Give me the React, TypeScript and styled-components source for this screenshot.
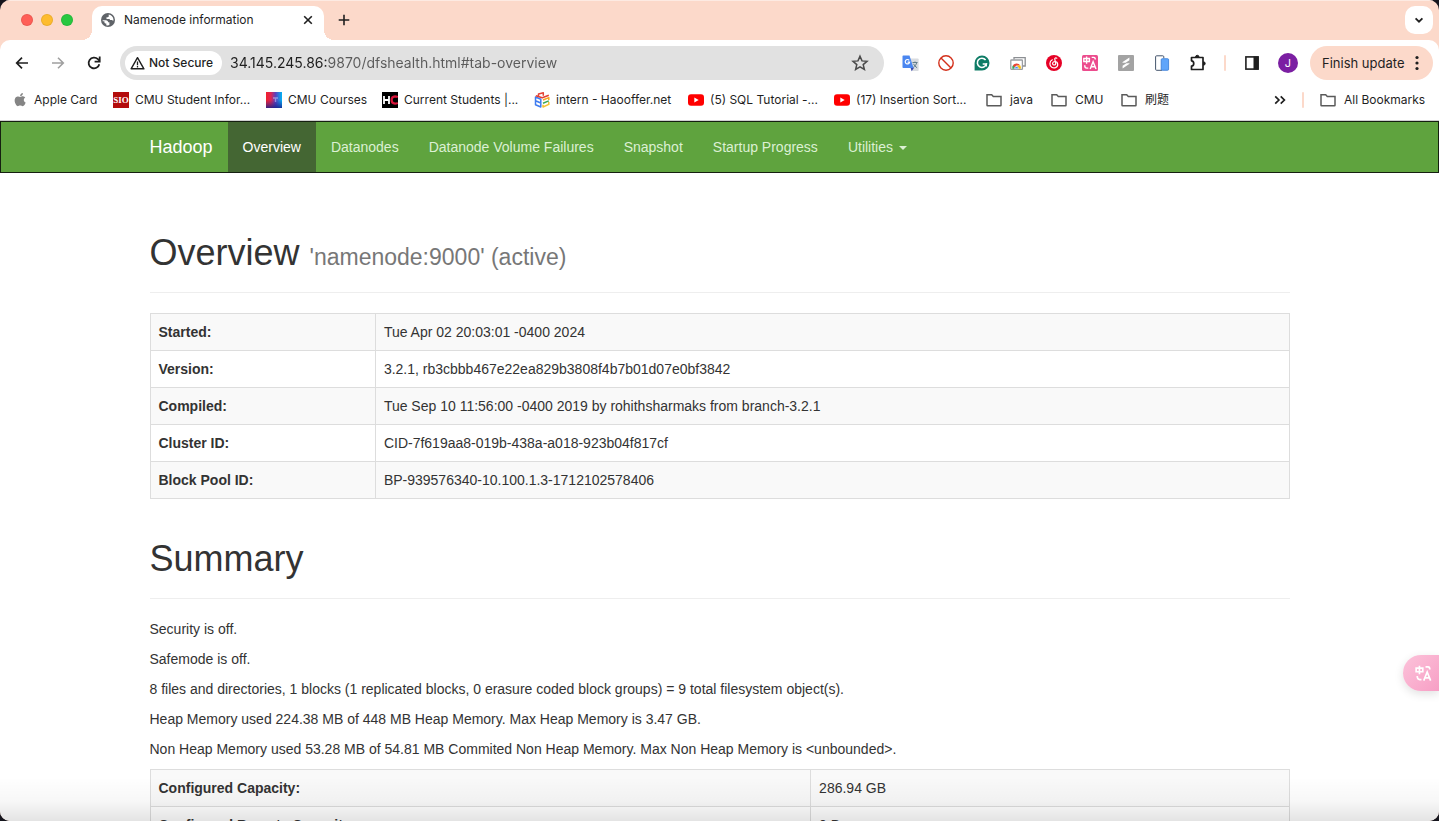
import React from 'react';
import styled, { createGlobalStyle } from 'styled-components';

const UI_FONT = "Inter, 'Noto Sans CJK SC', sans-serif";
const PAGE_FONT = "'Liberation Sans', Arial, sans-serif";
const PEACH = '#fcd9ca';

const GlobalStyle = createGlobalStyle`
  *, *::before, *::after { box-sizing: border-box; }
  body { margin: 0; background: #15151d; overflow: hidden; }
  button, input { font: inherit; color: inherit; border: 0; padding: 0; background: none; }
  a { color: inherit; text-decoration: none; }
  svg { display: block; flex: none; }
`;

const Window = styled.div`
  position: relative;
  display: flex;
  flex-direction: column;
  height: 100vh;
  overflow: hidden;
  background: ${PEACH};
  border-radius: 10px;
`;

/* ---------- tab strip ---------- */

const TabStrip = styled.header`
  display: flex;
  align-items: flex-end;
  flex: none;
  height: 40px;
  padding: 0 6px 0 21px;
  font-family: ${UI_FONT};
  box-shadow: inset 0 1px 0 #fdeae2;
`;

const TrafficLights = styled.div`
  display: flex;
  align-items: center;
  gap: 8px;
  width: 71px;
  height: 40px;
`;

const Light = styled.button<{ $color: string }>`
  width: 12px;
  height: 12px;
  border-radius: 50%;
  background: ${(p) => p.$color};
  box-shadow: inset 0 0 0 1px rgba(0, 0, 0, 0.08);
`;

const Tab = styled.div`
  position: relative;
  display: flex;
  align-items: center;
  width: 232px;
  height: 34px;
  padding: 0 8px 6px;
  border-radius: 10px 10px 0 0;
  background: #fff;
  color: #1f1f1f;
  font-size: 12px;
  line-height: 16px;

  &::before, &::after {
    content: '';
    position: absolute;
    bottom: 0;
    width: 10px;
    height: 10px;
  }
  &::before { left: -10px; background: radial-gradient(circle at 0 0, transparent 10px, #fff 10px); }
  &::after { right: -10px; background: radial-gradient(circle at 100% 0, transparent 10px, #fff 10px); }
`;

const TabTitle = styled.span`
  flex: 1;
  margin-left: 8px;
  white-space: nowrap;
`;

const IconButton = styled.button<{ $w?: number }>`
  display: flex;
  align-items: center;
  justify-content: center;
  flex: none;
  width: ${(p) => p.$w ?? 36}px;
  height: 28px;
`;

const NewTab = styled(IconButton)`
  margin: 0 auto 6px 6px;
`;

const TabSearch = styled(IconButton)`
  margin-bottom: 6px;
  border-radius: 10px;
  background: #fff;
`;

/* ---------- toolbar ---------- */

const Toolbar = styled.div`
  display: flex;
  align-items: center;
  flex: none;
  height: 46px;
  padding: 0 6px 0 4px;
  border-radius: 10px 10px 0 0;
  background: #fff;
  color: #1f1f1f;
  font-family: ${UI_FONT};
`;

const AddressBar = styled.div`
  display: flex;
  align-items: center;
  flex: 1;
  min-width: 0;
  height: 34px;
  margin: 0 8px;
  padding: 0 6px 0 5px;
  border-radius: 17px;
  background: #e1e1e1;
`;

const SecurityChip = styled.button`
  display: flex;
  align-items: center;
  gap: 4px;
  flex: none;
  width: 97px;
  height: 24px;
  padding-left: 5px;
  border-radius: 12px;
  background: #fff;
  font-size: 12px;
  font-weight: 500;
  line-height: 16px;
  white-space: nowrap;
`;

const UrlInput = styled.input`
  flex: 1;
  min-width: 0;
  height: 24px;
  margin-left: 8px;
  padding-bottom: 1px;
  outline: none;
  font-size: 14px;
  line-height: 20px;
  background: linear-gradient(to right, #1f1f1f 97px, #5a5a5a 97px);
  background-clip: text;
  -webkit-background-clip: text;
  -webkit-text-fill-color: transparent;
`;

const Divider = styled.span`
  flex: none;
  width: 2px;
  height: 16px;
  margin: 0 8px;
  border-radius: 1px;
  background: ${PEACH};
`;

const Avatar = styled.span`
  width: 20px;
  height: 20px;
  border-radius: 50%;
  background: #7b1fa2;
  color: #fff;
  font-size: 11px;
  line-height: 20px;
  text-align: center;
`;

const UpdateButton = styled.button`
  display: flex;
  align-items: center;
  justify-content: space-between;
  flex: none;
  width: 123px;
  height: 34px;
  margin-left: 4px;
  padding: 0 14px 0 12px;
  border-radius: 17px;
  background: ${PEACH};
  font-size: 13px;
  line-height: 16px;
  white-space: nowrap;
`;

/* ---------- bookmarks ---------- */

const BookmarkBar = styled.nav`
  display: flex;
  align-items: center;
  flex: none;
  height: 35px;
  padding: 0 15px 7px 12px;
  border-bottom: 1px solid #d0d0d0;
  background: #fff;
  color: #1f1f1f;
  font-family: ${UI_FONT};
  font-size: 12px;
  line-height: 16px;
`;

const Bookmark = styled.a<{ $w?: number; $folder?: boolean }>`
  display: flex;
  align-items: center;
  gap: ${(p) => (p.$folder ? 8 : 6)}px;
  flex: none;
  width: ${(p) => (p.$w ? `${p.$w}px` : 'auto')};
  white-space: nowrap;
`;

const AllBookmarks = styled(Bookmark)`
  margin-left: 8px;
`;

const Overflow = styled(IconButton)`
  margin-left: auto;
`;

/* ---------- page ---------- */

const Page = styled.div`
  flex: 1;
  min-height: 0;
  overflow: hidden;
  background: #fff;
  color: #333;
  font-family: ${PAGE_FONT};
  font-size: 14px;
  line-height: 20px;
`;

const Container = styled.div`
  max-width: 1170px;
  margin: 0 auto;
  padding: 0 15px;
`;

const Content = styled(Container)`
  display: flow-root;
`;

const Navbar = styled.nav`
  margin-bottom: 20px;
  border: 1px solid #151f10;
  background: #5fa33e;
`;

const NavRow = styled(Container)`
  display: flex;
`;

const Brand = styled.a`
  padding: 15px 15px 15px 0;
  color: #fff;
  font-size: 18px;
`;

const NavList = styled.ul`
  display: flex;
  margin: 0;
  padding: 0;
  list-style: none;
`;

const NavLink = styled.a<{ $active?: boolean }>`
  display: flex;
  align-items: center;
  gap: 6px;
  padding: 15px;
  color: ${(p) => (p.$active ? '#fff' : '#dcf0d3')};
  background: ${(p) => (p.$active ? '#446633' : 'transparent')};
`;

const Caret = styled.span`
  margin-top: 2px;
  border-top: 4px solid;
  border-left: 4px solid transparent;
  border-right: 4px solid transparent;
`;

const PageHeader = styled.div`
  margin: 40px 0 20px;
  padding-bottom: 19px;
  border-bottom: 1px solid #eee;
`;

const Title = styled.h1`
  margin: 0;
  font-size: 36px;
  font-weight: 400;
  line-height: 40px;
`;

const Subtitle = styled.small`
  color: #777;
  font-size: 23px;
  line-height: 1;
`;

const InfoTable = styled.table`
  width: 100%;
  margin-bottom: 20px;
  border-collapse: collapse;

  tr:nth-child(odd) > * { background: #f9f9f9; }
`;

const LabelCell = styled.th<{ $share?: number }>`
  width: ${(p) => (p.$share ? `${p.$share}%` : 'auto')};
  padding: 8px;
  border: 1px solid #ddd;
  text-align: left;
`;

const ValueCell = styled.td`
  padding: 8px;
  border: 1px solid #ddd;
`;

const Line = styled.p`
  margin: 0 0 10px;
`;

const BottomShade = styled.div`
  position: absolute;
  right: 0;
  bottom: 0;
  left: 0;
  height: 44px;
  background: linear-gradient(rgba(0, 0, 0, 0), rgba(0, 0, 0, 0.03) 55%, rgba(0, 0, 0, 0.11));
  pointer-events: none;
`;

const TranslateFab = styled.button`
  position: absolute;
  right: 0;
  bottom: 130px;
  display: flex;
  align-items: center;
  width: 36px;
  height: 36px;
  padding-left: 11px;
  border-radius: 18px 0 0 18px;
  background: linear-gradient(135deg, #fcc3da, #f79fc5);
  box-shadow: 0 3px 10px rgba(0, 0, 0, 0.12);
`;

/* ---------- icons ---------- */

const Stroke = ({ d, size = 16, color = '#1f1f1f', w = 2 }: { d: string; size?: number; color?: string; w?: number }) => (
  <svg width={size} height={size} viewBox="0 0 16 16" fill="none" stroke={color} strokeWidth={w}>
    <path d={d} />
  </svg>
);

const GlobeIcon = () => (
  <svg width="16" height="16" viewBox="0 0 16 16">
    <circle cx="8" cy="8" r="7" fill="#5f6368" />
    <path
      fill="#fff"
      d="M2.6 8.2h3.3c1.6 0 2.2 1 2.2 2.1h1.3v2.8c-.9.4-2.1.5-3.1.2v-1.7c-1.2 0-1.9-.7-1.9-1.6v-.8H2.7zM8.7 2.6c2.4.3 4.2 2.1 4.7 4.4.1.8 0 1.4-.2 2.1-.5-.7-1.2-1-2.4-1-.9 0-1.1-.5-1.1-1.2H6.500V5.200h1.400c.8 0 .8-.5.8-1.200z"
    />
  </svg>
);

const WarningIcon = () => (
  <svg width="15" height="15" viewBox="0 0 15 15" fill="none" stroke="#1f1f1f">
    <path d="M7.500 1.700 13.900 12.800H1.100Z" strokeWidth="1.400" strokeLinejoin="round" />
    <path d="M7.500 5.500v3.700M7.500 10v1.400" strokeWidth="1.300" />
  </svg>
);

const ReloadIcon = () => (
  <svg width="16" height="16" viewBox="0 0 16 16" fill="none" stroke="#1f1f1f" strokeWidth="1.800">
    <path d="M13.300 9.200A5.400 5.400 0 1 1 11.900 4.200L13.400 5.700" />
    <path d="M13.700 1.500v5.100H8.600" />
  </svg>
);

const StarIcon = () => (
  <svg width="18" height="18" viewBox="0 0 18 18" fill="none" stroke="#4a4a4a" strokeWidth="1.500">
    <path d="M9 2.200 11 6.900 16 7.300 12.200 10.600 13.400 15.500 9 12.900 4.600 15.500 5.800 10.600 2 7.300 7 6.900Z" />
  </svg>
);

const GoogleTranslateIcon = () => (
  <svg width="17" height="17" viewBox="0 0 17 17">
    <path d="M6 3.500h9.800a.8.8 0 0 1 .8.8v11a.8.8 0 0 1-.8.800H10z" fill="#d9dce0" />
    <path d="M8.500 12.500h3.800l-2.700 3.800z" fill="#3949ab" />
    <path d="M1.300.5h6.200l4 12.500H1.300a.8.8 0 0 1-.8-.8V1.300a.8.800 0 0 1 .8-.8z" fill="#4a86f0" />
    <path d="M7.200 5.400A2.200 2.200 0 1 0 7.600 7.100H5.600" fill="none" stroke="#fff" strokeWidth="1.200" />
    <path d="M10.500 7.500h5M13 6.500v1M14.700 7.600c-.4 2-1.600 3.500-3.200 4.500M11.500 8.800c.8 1.800 2 3 3.600 4" fill="none" stroke="#607d8b" strokeWidth="1" />
  </svg>
);

const BlockIcon = () => (
  <svg width="16" height="16" viewBox="0 0 16 16" fill="none" stroke="#d3301b" strokeWidth="1.400">
    <circle cx="8" cy="8" r="7.200" />
    <path d="m3 3 10 10" />
  </svg>
);

const GrammarlyIcon = () => (
  <svg width="16" height="16" viewBox="0 0 16 16">
    <path d="M8 .5A7.500 7.500 0 1 1 8 15.500H.6V8A7.500 7.500 0 0 1 8 .5z" fill="#0e7c66" />
    <path d="M11.600 5A4.600 4.600 0 1 0 12.400 9H8.700" fill="none" stroke="#fff" strokeWidth="1.600" />
    <path d="M12.400 8.300v3.200" stroke="#fff" strokeWidth="1.200" />
  </svg>
);

const RemoteIcon = () => (
  <svg width="16" height="16" viewBox="0 0 16 16">
    <path d="M4 4.500V2.700h11.200V11h-2.200" fill="none" stroke="#8c8f93" strokeWidth="1.300" />
    <rect x=".8" y="5" width="11.600" height="9.300" rx=".6" fill="#fff" stroke="#9a9da1" strokeWidth="1.300" />
    <path d="M2.300 13.700a4.300 4.300 0 0 1 1-3.900l2 3.900z" fill="#34a853" />
    <path d="M2.900 10.300A4.400 4.400 0 0 1 10.300 10.600H6.600l-2 1.800z" fill="#ea4335" />
    <path d="M7 10.600h3.300a4.300 4.300 0 0 1 .5 3.100H7.800z" fill="#fbbc04" />
    <path d="M4.500 13.700a2.100 2.100 0 0 1 4.200 0z" fill="#4285f4" stroke="#fff" strokeWidth=".5" />
  </svg>
);

const MusicIcon = () => (
  <svg width="16" height="16" viewBox="0 0 16 16">
    <circle cx="8" cy="8" r="8" fill="#e60026" />
    <path
      d="M10.800 3.200c-1-.6-2.300-.1-2 1.200l.9 3.900c.3 2-2.900 2.400-3.100.4-.1-1.300 1-2.200 2.300-2.200 3.300 0 4 4.800.6 6.100-2.600.9-5.600-.8-5.600-3.900 0-1.900 1-3.200 2.400-3.900"
      fill="none"
      stroke="#fff"
      strokeWidth="1.200"
      strokeLinecap="round"
    />
  </svg>
);

const TranslateGlyph = () => (
  <g fill="none" stroke="#fff" strokeWidth="1.400">
    <path d="M1.800 3.500h5.600v3H1.800zM4.600 1.500v7.200" />
    <path d="M9.700 2.400h2.100q1.500 0 1.500 2.200M2.700 10.200q0 2.900 2.100 2.900h1.500" />
    <path d="m8.200 14 2.900-7.300L14 14M9.300 11.700h3.600" />
  </g>
);

const PinkTranslateIcon = () => (
  <svg width="16" height="16" viewBox="0 0 16 16">
    <rect width="16" height="16" rx="1.500" fill="#ec4c8d" />
    <TranslateGlyph />
  </svg>
);

const BoltIcon = () => (
  <svg width="16" height="16" viewBox="0 0 16 16">
    <rect width="16" height="16" rx="1" fill="#a3a3a3" />
    <path d="M4.300 7.200 11.400 2.600v2.700L7.600 7.800H4.800zM4.600 13.400v-2.700l3.800-2.500h3l.1.600z" fill="#fff" />
  </svg>
);

const DevicesIcon = () => (
  <svg width="16" height="16" viewBox="0 0 16 16">
    <path d="M8 15.300H2.600q-1 0-1-1V1.800q0-1 1-1h6.200q1 0 1 1v1.500" fill="none" stroke="#44546c" />
    <rect x="7.200" y="3.700" width="7.400" height="11.600" rx="1" fill="#5fa5fa" stroke="#3478d4" strokeWidth=".8" />
  </svg>
);

const PuzzleIcon = () => (
  <svg width="18" height="18" viewBox="0 0 18 18">
    <path
      d="M2.500 3.500H14v12H2.500v-3.400c3-.2 3-5.100 0-5.300z"
      fill="none"
      stroke="#1f1f1f"
      strokeWidth="1.700"
      strokeLinejoin="round"
    />
    <path d="M6.600 3a1.700 1.700 0 0 1 3.400 0zM14.500 7.800a1.700 1.700 0 0 1 0 3.400z" fill="#1f1f1f" stroke="#1f1f1f" />
  </svg>
);

const SidePanelIcon = () => (
  <svg width="16" height="16" viewBox="0 0 16 16">
    <rect x="1.900" y="1.900" width="12.200" height="12.200" fill="#fff" stroke="#1f1f1f" strokeWidth="1.600" />
    <path d="M9.500 1.500h5v13h-5z" fill="#1f1f1f" />
  </svg>
);

const DotsIcon = () => (
  <svg width="4" height="16" viewBox="0 0 4 16" fill="#1f1f1f">
    <circle cx="2" cy="2.500" r="1.600" />
    <circle cx="2" cy="8" r="1.600" />
    <circle cx="2" cy="13.500" r="1.600" />
  </svg>
);

const AppleIcon = () => (
  <svg width="16" height="16" viewBox="0 0 16 16" fill="#858585">
    <path d="M8.300 4.900c.9 0 1.500-.7 2.700-.6 1.100.1 1.800.5 2.300 1.200-2.200 1.300-1.800 4.200.4 5.100-.6 1.700-1.700 3.500-3 3.600-.9 0-1.300-.6-2.500-.6s-1.600.6-2.400.6C3.900 14.200 1.200 8.300 3.600 5.600c1.500-1.600 3.300-1.200 4.700-.7z" />
    <path d="M8.100 4.200c-.1-1.700 1.200-3 2.800-3.200.1 1.700-1.200 3.200-2.800 3.200z" />
  </svg>
);

const BadgeText = styled.text`
  font-family: 'Liberation Serif', serif;
  font-size: 9px;
  font-weight: 700;
  text-anchor: middle;
  fill: #fff;
`;

const SioIcon = () => (
  <svg width="16" height="16" viewBox="0 0 16 16">
    <rect width="16" height="16" fill="#b30c0c" />
    <BadgeText x="8" y="11">SIO</BadgeText>
  </svg>
);

const CoursesIcon = () => (
  <svg width="16" height="16" viewBox="0 0 16 16">
    <defs>
      <linearGradient id="courses" x1="0" y1="0" x2="1" y2="0">
        <stop offset="0" stopColor="#f0202c" />
        <stop offset=".3" stopColor="#e02450" />
        <stop offset=".6" stopColor="#5a40c0" />
        <stop offset="1" stopColor="#00b4f4" />
      </linearGradient>
      <linearGradient id="coursesShade" x1="0" y1="0" x2="0" y2="1">
        <stop offset=".5" stopColor="#1a2a9c" stopOpacity="0" />
        <stop offset="1" stopColor="#16208c" stopOpacity=".85" />
      </linearGradient>
    </defs>
    <rect width="16" height="16" fill="url(#courses)" />
    <rect width="16" height="16" fill="url(#coursesShade)" />
    <path d="M7 6h5M9.500 6v4" stroke="#b9c6f4" strokeWidth="1.300" opacity=".6" />
  </svg>
);

const HcIcon = () => (
  <svg width="16" height="16" viewBox="0 0 16 16" fill="none">
    <rect width="16" height="16" fill="#000" />
    <path d="M2 4v8M7 4v8M2 8h5" stroke="#fff" strokeWidth="1.800" />
    <path d="M15.800 5.200Q14.600 4.400 13 4.400 9.600 4.600 9.600 8t3.400 3.600q1.700 0 2.800-.8" stroke="#d8143a" strokeWidth="2.200" />
  </svg>
);

const HaoofferIcon = () => (
  <svg width="16" height="16" viewBox="0 0 16 16" fill="none" strokeWidth="1.500" strokeLinejoin="round">
    <path d="M1.500 5v7.700l5.300 2.300V7.300zM1.500 8.800l5.300 2.200" stroke="#3f7cf0" />
    <path d="M1.800 3.700 8.300 5.700 14.800 3.300M4.500 4.300V2l4.800-1.200v3" stroke="#e34234" />
    <path d="M9 8 14.800 5.600v2.300" stroke="#f5a623" />
    <path d="M9 11.300 14.800 8.900" stroke="#3aa757" />
    <path d="M14.800 10v2.400L9 15v-2.300" stroke="#f7c232" />
  </svg>
);

const YouTubeIcon = () => (
  <svg width="16" height="16" viewBox="0 0 16 16">
    <rect y="2.300" width="16" height="11.400" rx="3" fill="#f00" />
    <path d="M6.300 5.500v5L10.700 8z" fill="#fff" />
  </svg>
);

const FolderIcon = () => (
  <Stroke w={1.500} color="#5a5a5a" d="M1 2.800h4.700l1.600 1.700H15v8.700q0 .5-.5.500H1.500q-.5 0-.5-.5z" />
);

/* ---------- data ---------- */

const extensions: [string, React.ReactNode][] = [
  ['Google Translate', <GoogleTranslateIcon />],
  ['Blocker', <BlockIcon />],
  ['Grammarly', <GrammarlyIcon />],
  ['Remote Desktop', <RemoteIcon />],
  ['Music', <MusicIcon />],
  ['Translate', <PinkTranslateIcon />],
  ['Shortcuts', <BoltIcon />],
  ['Devices', <DevicesIcon />],
  ['Extensions', <PuzzleIcon />],
];

const bookmarks: { label: string; icon: React.ReactNode; width: number; folder?: boolean }[] = [
  { label: 'Apple Card', icon: <AppleIcon />, width: 101 },
  { label: 'CMU Student Infor...', icon: <SioIcon />, width: 153 },
  { label: 'CMU Courses', icon: <CoursesIcon />, width: 116 },
  { label: 'Current Students |...', icon: <HcIcon />, width: 152 },
  { label: 'intern - Haooffer.net', icon: <HaoofferIcon />, width: 154 },
  { label: '(5) SQL Tutorial -...', icon: <YouTubeIcon />, width: 146 },
  { label: '(17) Insertion Sort...', icon: <YouTubeIcon />, width: 152 },
  { label: 'java', icon: <FolderIcon />, width: 65, folder: true },
  { label: 'CMU', icon: <FolderIcon />, width: 70, folder: true },
  { label: '刷题', icon: <FolderIcon />, width: 48, folder: true },
];

const navLinks = ['Overview', 'Datanodes', 'Datanode Volume Failures', 'Snapshot', 'Startup Progress'];

const overviewRows: [string, string][] = [
  ['Started:', 'Tue Apr 02 20:03:01 -0400 2024'],
  ['Version:', '3.2.1, rb3cbbb467e22ea829b3808f4b7b01d07e0bf3842'],
  ['Compiled:', 'Tue Sep 10 11:56:00 -0400 2019 by rohithsharmaks from branch-3.2.1'],
  ['Cluster ID:', 'CID-7f619aa8-019b-438a-a018-923b04f817cf'],
  ['Block Pool ID:', 'BP-939576340-10.100.1.3-1712102578406'],
];

const summaryLines = [
  'Security is off.',
  'Safemode is off.',
  '8 files and directories, 1 blocks (1 replicated blocks, 0 erasure coded block groups) = 9 total filesystem object(s).',
  'Heap Memory used 224.38 MB of 448 MB Heap Memory. Max Heap Memory is 3.47 GB.',
  'Non Heap Memory used 53.28 MB of 54.81 MB Commited Non Heap Memory. Max Non Heap Memory is <unbounded>.',
];

const capacityRows: [string, string][] = [
  ['Configured Capacity:', '286.94 GB'],
  ['Configured Remote Capacity:', '0 B'],
];

const DataTable = ({ rows, share }: { rows: [string, string][]; share?: number }) => (
  <InfoTable>
    <tbody>
      {rows.map(([label, value]) => (
        <tr key={label}>
          <LabelCell scope="row" $share={share}>{label}</LabelCell>
          <ValueCell>{value}</ValueCell>
        </tr>
      ))}
    </tbody>
  </InfoTable>
);

export default function App() {
  return (
    <Window>
      <GlobalStyle />
      <TabStrip>
        <TrafficLights>
          <Light $color="#ff5f57" aria-label="Close window" />
          <Light $color="#febc2e" aria-label="Minimise window" />
          <Light $color="#28c840" aria-label="Zoom window" />
        </TrafficLights>
        <Tab>
          <GlobeIcon />
          <TabTitle>Namenode information</TabTitle>
          <IconButton $w={16} aria-label="Close tab">
            <Stroke w={1.600} d="m4.200 4.200 7.600 7.600m0-7.600-7.600 7.600" />
          </IconButton>
        </Tab>
        <NewTab $w={28} aria-label="New tab">
          <Stroke w={1.600} d="M8 2.700v10.600M2.700 8h10.600" />
        </NewTab>
        <TabSearch $w={28} aria-label="Search tabs">
          <Stroke w={1.800} d="m4.600 6.300 3.400 3.400 3.400-3.400" />
        </TabSearch>
      </TabStrip>

      <Toolbar>
        <IconButton aria-label="Back">
          <Stroke w={1.700} d="M14 8H3M8 2.700 2.700 8 8 13.300" />
        </IconButton>
        <IconButton aria-label="Forward">
          <Stroke w={1.600} color="#a0a0a0" d="M2 8h11M8 2.700 13.300 8 8 13.300" />
        </IconButton>
        <IconButton aria-label="Reload"><ReloadIcon /></IconButton>
        <AddressBar>
          <SecurityChip><WarningIcon />Not Secure</SecurityChip>
          <UrlInput aria-label="Address" defaultValue="34.145.245.86:9870/dfshealth.html#tab-overview" spellCheck={false} />
          <IconButton aria-label="Bookmark this page"><StarIcon /></IconButton>
        </AddressBar>
        {extensions.map(([name, icon]) => (
          <IconButton key={name} aria-label={name}>{icon}</IconButton>
        ))}
        <Divider />
        <IconButton aria-label="Side panel"><SidePanelIcon /></IconButton>
        <IconButton aria-label="Profile"><Avatar>J</Avatar></IconButton>
        <UpdateButton>Finish update<DotsIcon /></UpdateButton>
      </Toolbar>

      <BookmarkBar aria-label="Bookmarks">
        {bookmarks.map(({ label, icon, width, folder }) => (
          <Bookmark key={label} href="#" $w={width} $folder={folder}>{icon}{label}</Bookmark>
        ))}
        <Overflow $w={28} aria-label="More bookmarks">
          <Stroke w={1.700} d="m3.200 4.300 3.700 3.700-3.700 3.700M8.700 4.300l3.700 3.700-3.700 3.700" />
        </Overflow>
        <Divider />
        <AllBookmarks href="#" $w={104} $folder><FolderIcon />All Bookmarks</AllBookmarks>
      </BookmarkBar>

      <Page>
        <Navbar aria-label="Main">
          <NavRow>
            <Brand href="#">Hadoop</Brand>
            <NavList>
              {navLinks.map((label, i) => (
                <li key={label}><NavLink href="#" $active={i === 0}>{label}</NavLink></li>
              ))}
              <li><NavLink as="button" aria-haspopup="true">Utilities<Caret /></NavLink></li>
            </NavList>
          </NavRow>
        </Navbar>
        <Content as="main">
          <PageHeader>
            <Title>Overview <Subtitle>'namenode:9000' (active)</Subtitle></Title>
          </PageHeader>
          <DataTable rows={overviewRows} />
          <PageHeader>
            <Title>Summary</Title>
          </PageHeader>
          {summaryLines.map((line) => <Line key={line}>{line}</Line>)}
          <DataTable rows={capacityRows} share={58} />
        </Content>
      </Page>
      <BottomShade />
      <TranslateFab aria-label="Translate page">
        <svg width="19" height="19" viewBox="0 0 16 16"><TranslateGlyph /></svg>
      </TranslateFab>
    </Window>
  );
}
